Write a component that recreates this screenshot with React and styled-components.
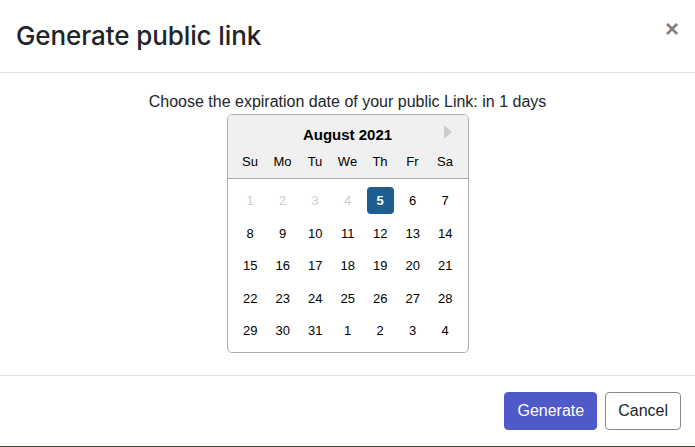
import React from "react";
import styled, { createGlobalStyle } from "styled-components";

const Global = createGlobalStyle`
  html, body { margin: 0; padding: 0; background: #3f4a3c; }
  body { font-family: "Liberation Sans", Arial, sans-serif; color: #212529; }
  * { box-sizing: border-box; }
`;

const Modal = styled.div`
  width: 695px;
  height: 446px;
  background: #fff;
  display: flex;
  flex-direction: column;
`;

const Header = styled.div`
  display: flex;
  justify-content: space-between;
  align-items: flex-start;
  padding: 18px 16px 18px 16px;
  border-bottom: 1px solid #dee2e6;
`;

const Title = styled.h4`
  margin: 0;
  font-family: Inter, "Liberation Sans", Arial, sans-serif;
  font-size: 26px;
  line-height: 36px;
  font-weight: 500;
  letter-spacing: -0.1px;
  color: #212529;
`;

const Close = styled.button`
  border: 0;
  background: transparent;
  padding: 0;
  margin: 0;
  font-family: "Liberation Sans", Arial, sans-serif;
  font-size: 24px;
  font-weight: 700;
  line-height: 22px;
  color: #000;
  opacity: 0.5;
  cursor: pointer;
`;

const Body = styled.div`
  flex: 1;
  display: flex;
  flex-direction: column;
  align-items: center;
  padding-top: 17px;
`;

const Prompt = styled.div`
  font-size: 16px;
  line-height: 24px;
`;

const Calendar = styled.div`
  position: relative;
  width: 242px;
  border: 1px solid #aeaeae;
  border-radius: 5px;
  background: #fff;
  font-size: 13px;
  color: #000;
  overflow: hidden;
`;

const CalHeader = styled.div`
  background: #f0f0f0;
  border-bottom: 1px solid #aeaeae;
  padding-top: 10px;
  display: flex;
  flex-direction: column;
  align-items: center;
`;

const Month = styled.div`
  font-weight: 700;
  font-size: 15px;
  line-height: 20px;
  height: 20px;
`;

const NextArrow = styled.span`
  position: absolute;
  top: 10px;
  right: 16px;
  width: 0;
  height: 0;
  border-left: 8px solid #ccc;
  border-top: 7px solid transparent;
  border-bottom: 7px solid transparent;
`;

const Row = styled.div`
  display: grid;
  grid-template-columns: repeat(7, 32.5px);
  padding: 0 6.4px;
`;

const Cell = styled.div`
  width: 27.2px;
  height: 27.2px;
  margin: 2.66px;
  display: flex;
  align-items: center;
  justify-content: center;
  border-radius: 4px;
  line-height: 1;
  color: ${(p) => (p.$selected ? "#fff" : p.$disabled ? "#ccc" : "#000")};
  background: ${(p) => (p.$selected ? "#1d5d90" : "transparent")};
  font-weight: ${(p) => (p.$selected ? 700 : 400)};
`;

const Weeks = styled.div`
  padding: 6px 0 5px;
`;

const Footer = styled.div`
  display: flex;
  justify-content: flex-end;
  gap: 8px;
  padding: 16px 14px 16px 16px;
  border-top: 1px solid #dee2e6;
`;

const Button = styled.button`
  font-family: "Liberation Sans", Arial, sans-serif;
  font-size: 16px;
  line-height: 24px;
  padding: 6px 12px;
  border-radius: 4px;
  border: 1px solid ${(p) => (p.$primary ? "#5059c9" : "#8a8a8a")};
  background: ${(p) => (p.$primary ? "#5059c9" : "#fff")};
  color: ${(p) => (p.$primary ? "#fff" : "#212529")};
  cursor: pointer;
`;

const dayNames = ["Su", "Mo", "Tu", "We", "Th", "Fr", "Sa"];
const weeks = [
  [1, 2, 3, 4, 5, 6, 7],
  [8, 9, 10, 11, 12, 13, 14],
  [15, 16, 17, 18, 19, 20, 21],
  [22, 23, 24, 25, 26, 27, 28],
  [29, 30, 31, 1, 2, 3, 4],
];

export default function App() {
  return (
    <>
      <Global />
      <Modal>
        <Header>
          <Title>Generate public link</Title>
          <Close aria-label="Close">×</Close>
        </Header>
        <Body>
          <Prompt>Choose the expiration date of your public Link: in 1 days</Prompt>
          <Calendar>
            <NextArrow />
            <CalHeader>
              <Month>August 2021</Month>
              <Row>
                {dayNames.map((d) => (
                  <Cell key={d}>{d}</Cell>
                ))}
              </Row>
            </CalHeader>
            <Weeks>
              {weeks.map((w, wi) => (
                <Row key={wi}>
                  {w.map((d, di) => (
                    <Cell
                      key={di}
                      $disabled={wi === 0 && d < 5}
                      $selected={wi === 0 && d === 5}
                    >
                      {d}
                    </Cell>
                  ))}
                </Row>
              ))}
            </Weeks>
          </Calendar>
        </Body>
        <Footer>
          <Button $primary>Generate</Button>
          <Button>Cancel</Button>
        </Footer>
      </Modal>
    </>
  );
}
